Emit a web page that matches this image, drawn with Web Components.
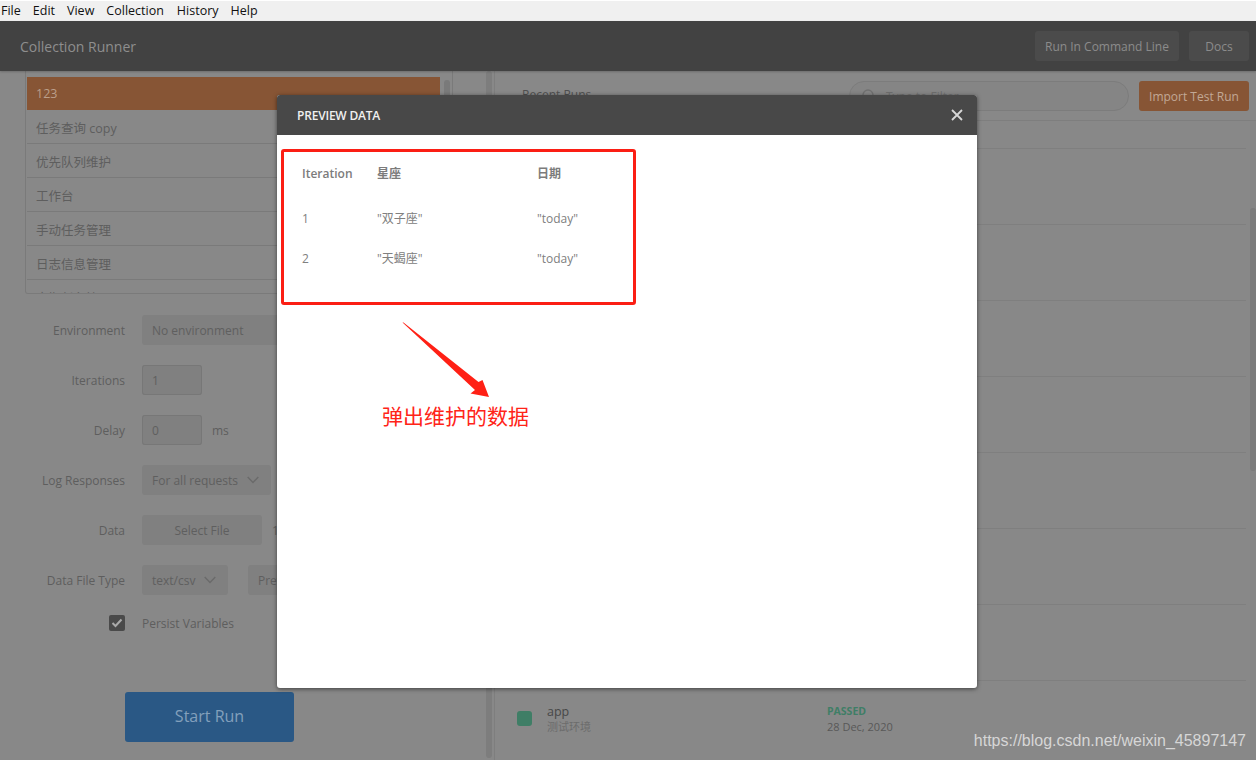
<!DOCTYPE html>
<html lang="zh"><head><meta charset="utf-8"><title>Collection Runner</title>
<style>
html,body{margin:0;height:760px;overflow:hidden;background:#888}
body{font:13px "Open Sans","Noto Sans CJK SC",sans-serif;color:#5e5e5e}
</style></head><body>
<x-app>
  <x-menubar slot="menu"><span>File</span><span>Edit</span><span>View</span><span>Collection</span><span style="margin-left:1px">History</span><span>Help</span></x-menubar>
  <x-topbar slot="top" title-text="Collection Runner"><x-btn kind="dark" w="144">Run In Command Line</x-btn><x-btn kind="dark" w="60">Docs</x-btn></x-topbar>
  <x-sidebar slot="side">
    <x-collection-list>
      <x-list-row active>123</x-list-row><x-list-row>任务查询 copy</x-list-row><x-list-row>优先队列维护</x-list-row><x-list-row>工作台</x-list-row><x-list-row>手动任务管理</x-list-row><x-list-row>日志信息管理</x-list-row><x-list-row>定期任务管理</x-list-row>
    </x-collection-list>
    <x-field label="Environment" style="margin-top:21px"><x-btn kind="select" w="300" left>No environment</x-btn></x-field>
    <x-field label="Iterations"><x-btn kind="input" w="60" left>1</x-btn></x-field>
    <x-field label="Delay"><x-btn kind="input" w="60" left>0</x-btn><span style="margin-left:10px">ms</span></x-field>
    <x-field label="Log Responses"><x-btn kind="select" w="129" left caret>For all requests</x-btn></x-field>
    <x-field label="Data"><x-btn kind="select" w="120">Select File</x-btn><span style="margin-left:10px">1.csv</span></x-field>
    <x-field label="Data File Type"><x-btn kind="select" w="86" left caret>text/csv</x-btn><x-btn kind="select" w="80" style="margin-left:20px" left>Preview</x-btn></x-field>
    <x-check>Persist Variables</x-check>
    <x-btn kind="primary" w="169" h="50" style="margin:60px 0 0 125px">Start Run</x-btn>
  </x-sidebar>
  <x-runs slot="main">
    <x-run-row></x-run-row><x-run-row></x-run-row><x-run-row></x-run-row><x-run-row></x-run-row><x-run-row></x-run-row><x-run-row></x-run-row><x-run-row></x-run-row>
    <x-run-row name="app" env="测试环境" status="PASSED" date="28 Dec, 2020"></x-run-row>
  </x-runs>
</x-app>
<x-preview-modal></x-preview-modal>
<x-watermark>https://blog.csdn.net/weixin_45897147</x-watermark>
<script>
const FONT='"Open Sans","Noto Sans CJK SC",sans-serif';
function def(name,html){
  customElements.define(name,class extends HTMLElement{
    connectedCallback(){
      if(this.shadowRoot)return;
      const r=this.attachShadow({mode:'open'});
      r.innerHTML=typeof html==='function'?html(this):html;
    }
  });
}
def('x-app',`<style>:host{display:grid;width:1256px;height:760px;grid-template:21px 50px 1fr/495px 1fr;overflow:hidden}
 ::slotted([slot=menu]),::slotted([slot=top]){grid-column:1/3}</style>
 <slot name="menu"></slot><slot name="top"></slot><slot name="side"></slot><slot name="main"></slot>`);
def('x-menubar',`<style>:host{display:flex;gap:12px;align-items:center;background:#f0f0f0;border-top:1px solid #fff;box-sizing:border-box;height:21px;padding-left:1px;font:12.5px "Open Sans","Noto Sans",sans-serif;color:#111}
 ::slotted(span){line-height:20px}</style><slot></slot>`);
def('x-topbar',e=>`<style>:host{display:flex;align-items:center;gap:10px;background:#424242;padding:0 7px 0 20px;height:50px;box-sizing:border-box;box-shadow:0 1px 2px #0003;position:relative;z-index:2}
 b{flex:1;font:400 14px ${FONT};color:#8e8e8e}</style><b>${e.getAttribute('title-text')}</b><slot></slot>`);
def('x-btn',e=>{
  const k=e.getAttribute('kind'),w=e.getAttribute('w'),h=e.getAttribute('h')||30,left=e.hasAttribute('left'),caret=e.hasAttribute('caret');
  const c={dark:'background:#4b4b4b;color:#8b8b8b;',select:'background:#808080;color:#5f5f5f;',input:'background:#808080;color:#5f5f5f;box-shadow:inset 0 0 0 1px #777;',primary:'background:#2a5885;color:#83a0bc;',orange:'background:#875535;color:#c2a896;'}[k];
  return `<style>:host{display:flex;flex:none;box-sizing:border-box;width:${w}px;height:${h}px;border-radius:3px;align-items:center;justify-content:${left?'space-between':'center'};padding:0 ${left?'10px':'0'};font:${k==='primary'?'16px':'12px'} ${FONT};${c}}
  span{${k==='primary'?'margin-top:-2px':''}}
  svg{flex:none;margin-right:2px}</style><span><slot></slot></span>${caret?'<svg width="12" height="8" viewBox="0 0 12 8"><path d="M.7 1l5.300 5.400L11.300 1" fill="none" stroke="#6a6a6a" stroke-width="1.400"/></svg>':''}`;
});
def('x-sidebar',`<style>:host{display:flex;flex-direction:column;position:relative;height:689px;overflow:hidden;border-right:1px solid #7e7e7e;box-sizing:border-box}
 .bar{position:absolute;left:486px;top:0;bottom:2px;width:6px;background:#7d7d7d;border-radius:3px}</style><slot></slot><div class="bar"></div>`);
def('x-collection-list',`<style>:host{display:block;box-sizing:border-box;width:428px;height:223px;margin-left:25px;padding:6px 12px 0 1px;border:solid #7a7a7a;border-width:0 1px 1px 1px;border-radius:0 0 3px 3px;overflow:hidden;position:relative}
 i{position:absolute;right:2px;top:9px;width:6px;height:60px;background:#7a7a7a;border-radius:3px}</style><slot></slot><i></i>`);
def('x-list-row',e=>`<style>:host{display:flex;align-items:center;box-sizing:border-box;height:${e.hasAttribute('active')?33:34}px;padding:${e.hasAttribute('active')?0:2}px 0 0 9px;font:12.5px ${FONT};border-bottom:1px solid #7a7a7a;${e.hasAttribute('active')?'background:#875535;color:#bb9f8b;border:0;':'color:#5e5e5e;'}}</style><slot></slot>`);
def('x-field',e=>`<style>:host{display:flex;align-items:center;height:30px;margin-top:20px;font:12px ${FONT};color:#5e5e5e;white-space:nowrap}
 label{width:125px;margin-right:17px;text-align:right;flex:none}</style><label>${e.getAttribute('label')}</label><slot></slot>`);
def('x-check',`<style>:host{display:flex;align-items:center;height:16px;margin-top:20px;margin-bottom:1px;padding-left:109px;font:12px ${FONT};color:#5e5e5e}
 span{width:16px;height:16px;border-radius:2px;background:#4a4a4a;margin-right:17px;display:flex;align-items:center;justify-content:center}</style>
 <span><svg width="12" height="10" viewBox="0 0 12 10"><path d="M1.500 5l3 3 6-6.500" fill="none" stroke="#aaa" stroke-width="2"/></svg></span><slot></slot>`);
def('x-runs',`<style>:host{display:block;position:relative;overflow:hidden;height:689px}
 .tools{display:flex;align-items:center;box-sizing:border-box;height:50px;padding:10px 7px 9px 27px;border-bottom:1px solid #7e7e7e}
 h2{margin:0 0 4px;flex:1;font:400 12px ${FONT};color:#4f4f4f}
 .search{width:280px;height:30px;box-sizing:border-box;border:1px solid #7c7c7c;border-radius:15px;display:flex;align-items:center;gap:10px;padding-left:12px;font:12px ${FONT};color:#6e6e6e;margin-right:10px;background:#858585}
 .list{padding-top:27px;margin-right:10px}
 .track{position:absolute;right:0;top:50px;bottom:0;width:6px;background:#858585}
 .thumb{position:absolute;right:0;top:137px;height:263px;width:6px;background:#7b7b7b;border-radius:3px}</style>
 <div class="tools"><h2>Recent Runs</h2><div class="search"><svg width="14" height="14" viewBox="0 0 14 14"><circle cx="6" cy="6" r="5" fill="none" stroke="#707070" stroke-width="1.300"/><path d="M10 10l3 3" stroke="#707070" stroke-width="1.300"/></svg>Type to Filter</div><x-btn kind="orange" w="110">Import Test Run</x-btn></div>
 <div class="list"><slot></slot></div><div class="track"></div><div class="thumb"></div>`);
def('x-run-row',e=>{
  const n=e.getAttribute('name');
  return `<style>:host{display:flex;align-items:center;box-sizing:border-box;height:76px;border-top:1px solid #7f7f7f;padding:0 0 0 22px}
  i{width:15px;height:15px;border-radius:3px;background:#3f7e66;margin-right:15px;flex:none}
  .a{width:280px;font:12.5px/15px ${FONT};color:#474747}
  .a small{display:block;font-size:11px;color:#6c6c6c}
  .b{font:11px/15px ${FONT};color:#585858}
  .b b{display:block;font-size:10.500px;font-weight:700;color:#3f7e66}</style>
  ${n?`<i></i><div class="a">${n}<small>${e.getAttribute('env')}</small></div><div class="b"><b>${e.getAttribute('status')}</b>${e.getAttribute('date')}</div>`:''}`;
});
def('x-preview-modal',`<style>:host{position:absolute;left:277px;top:95px;width:700px;height:593px;background:#fff;border-radius:3px;box-shadow:0 1px 4px #0008;display:flex;flex-direction:column;font-family:${FONT}}
 header{height:40px;background:#484848;border-radius:3px 3px 0 0;display:flex;align-items:center;justify-content:space-between;padding:0 14px 0 20px;flex:none;color:#f0f0f0;font:600 12px ${FONT};letter-spacing:-.2px}
 table{border-collapse:collapse;margin:18px 0 0 25px;font:12px ${FONT};color:#808080}
 th{height:40px;padding:0;text-align:left;font-weight:600;color:#7c7c7c}
 td{height:40px;padding:0}
 tr.first td{padding-top:5px}
 .mark{position:absolute;left:4px;top:54px;width:355px;height:156px;box-sizing:border-box;border:3px solid #fb1e14;border-radius:3px}
 svg.arrow{position:absolute;left:0;top:0;width:700px;height:593px;pointer-events:none}
 .note{position:absolute;left:105px;top:307px;font:400 21px/26px "Noto Sans CJK SC",sans-serif;color:#ff2418;white-space:nowrap}</style>
 <header><span>PREVIEW DATA</span><svg width="12" height="12" viewBox="0 0 12 12"><path d="M1 1l10 10M11 1L1 11" stroke="#d8d8d8" stroke-width="1.800"/></svg></header>
 <table><colgroup><col width="75"><col width="160"><col></colgroup>
 <tr><th>Iteration</th><th>星座</th><th>日期</th></tr>
 <tr class="first"><td>1</td><td>"双子座"</td><td>"today"</td></tr>
 <tr><td>2</td><td>"天蝎座"</td><td>"today"</td></tr></table>
 <div class="mark"></div>
 <svg class="arrow" viewBox="0 0 700 593"><polygon fill="#ff2015" points="125.500,227.500 126.500,227.500 201.500,287 205.500,285 212,302 193.500,298.500 198,295"/></svg>
 <div class="note">弹出维护的数据</div>`);
def('x-watermark',`<style>:host{position:absolute;right:10px;top:730px;font:16px/22px "Liberation Sans",sans-serif;color:#d6d6d6;white-space:nowrap}</style><slot></slot>`);
</script>
</body></html>
